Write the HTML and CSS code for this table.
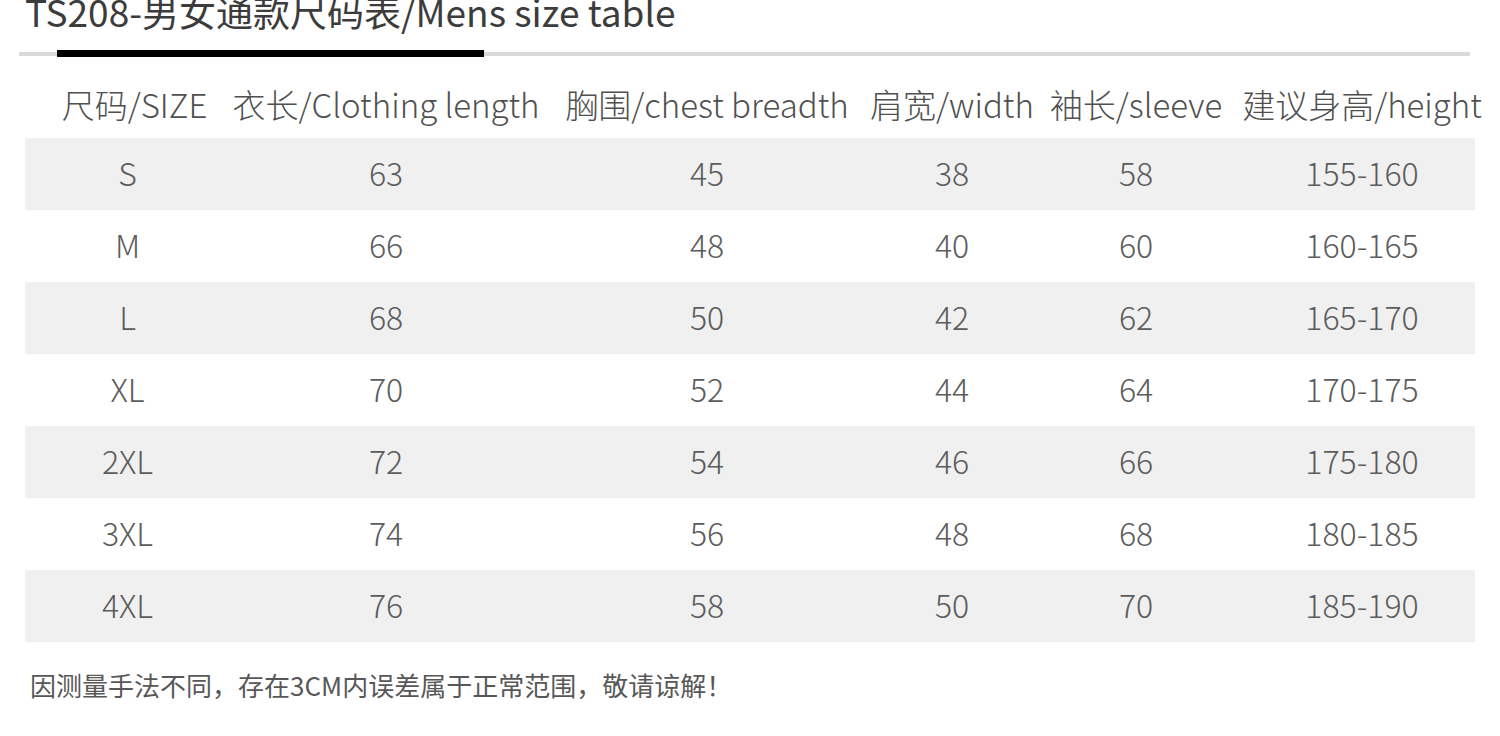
FILE: index.html
```html
<!DOCTYPE html>
<html lang="zh-CN">
<head>
<meta charset="utf-8">
<title>TS208 尺码表</title>
<link rel="stylesheet" href="styles.css">
</head>
<body>
<div class="page">
  <h1 class="title">TS208-男女通款尺码表/Mens size table</h1>
  <div class="rail"><div class="rail-bar"></div></div>

  <div class="table">
    <div class="row head">
      <div class="cell">尺码/SIZE</div>
      <div class="cell">衣长/Clothing length</div>
      <div class="cell">胸围/chest breadth</div>
      <div class="cell">肩宽/width</div>
      <div class="cell">袖长/sleeve</div>
      <div class="cell last">建议身高/height</div>
    </div>
    <div class="row body shade">
      <div class="cell">S</div><div class="cell">63</div><div class="cell">45</div><div class="cell">38</div><div class="cell">58</div><div class="cell last">155-160</div>
    </div>
    <div class="row body">
      <div class="cell">M</div><div class="cell">66</div><div class="cell">48</div><div class="cell">40</div><div class="cell">60</div><div class="cell last">160-165</div>
    </div>
    <div class="row body shade">
      <div class="cell">L</div><div class="cell">68</div><div class="cell">50</div><div class="cell">42</div><div class="cell">62</div><div class="cell last">165-170</div>
    </div>
    <div class="row body">
      <div class="cell">XL</div><div class="cell">70</div><div class="cell">52</div><div class="cell">44</div><div class="cell">64</div><div class="cell last">170-175</div>
    </div>
    <div class="row body shade">
      <div class="cell">2XL</div><div class="cell">72</div><div class="cell">54</div><div class="cell">46</div><div class="cell">66</div><div class="cell last">175-180</div>
    </div>
    <div class="row body">
      <div class="cell">3XL</div><div class="cell">74</div><div class="cell">56</div><div class="cell">48</div><div class="cell">68</div><div class="cell last">180-185</div>
    </div>
    <div class="row body shade">
      <div class="cell">4XL</div><div class="cell">76</div><div class="cell">58</div><div class="cell">50</div><div class="cell">70</div><div class="cell last">185-190</div>
    </div>
  </div>

  <p class="note">因测量手法不同，存在3CM内误差属于正常范围，敬请谅解！</p>
</div>
</body>
</html>
```

FILE: styles.css
```css
* {
  box-sizing: border-box;
}

html, body {
  margin: 0;
  padding: 0;
  background: #ffffff;
}

body {
  width: 1500px;
  height: 736px;
  overflow: hidden;
  font-family: "Noto Sans CJK SC", "Noto Sans", sans-serif;
  color: #555555;
}

.page {
  display: flex;
  flex-direction: column;
}

.title {
  margin: -7px 0 0 25px;
  font-size: 37px;
  font-weight: 400;
  line-height: 1;
  color: #3c3c3c;
  white-space: nowrap;
}

.rail {
  margin: 20px 0 0 19px;
  width: 1451px;
  height: 7px;
  display: flex;
  align-items: center;
  background: linear-gradient(#d9d9d9, #d9d9d9) center / 100% 4px no-repeat;
}

.rail-bar {
  margin-left: 38px;
  width: 427px;
  height: 7px;
  background: #000000;
}

.table {
  margin: 26px 0 0 25px;
  width: 1450px;
  display: flex;
  flex-direction: column;
}

.row {
  display: grid;
  grid-template-columns: 205px 312px 330px 160px 208px 235px;
}

.head {
  height: 46px;
  margin-bottom: 9px;
  font-size: 33px;
  font-weight: 300;
  color: #505050;
}

.head .cell {
  padding-bottom: 4px;
}

.body {
  height: 72px;
  font-size: 32px;
  font-weight: 300;
  color: #5c5c5c;
}

.body .cell {
  padding-bottom: 5px;
}

.shade {
  background: #f0f0f0;
}

.cell {
  display: flex;
  align-items: center;
  justify-content: center;
  white-space: nowrap;
  line-height: 1;
}

.head .cell:first-child {
  padding-left: 14px;
}

.cell.last {
  padding-left: 9px;
}

.note {
  margin: 25px 0 0 30px;
  font-size: 26px;
  line-height: 36px;
  color: #585858;
  white-space: nowrap;
}
```
